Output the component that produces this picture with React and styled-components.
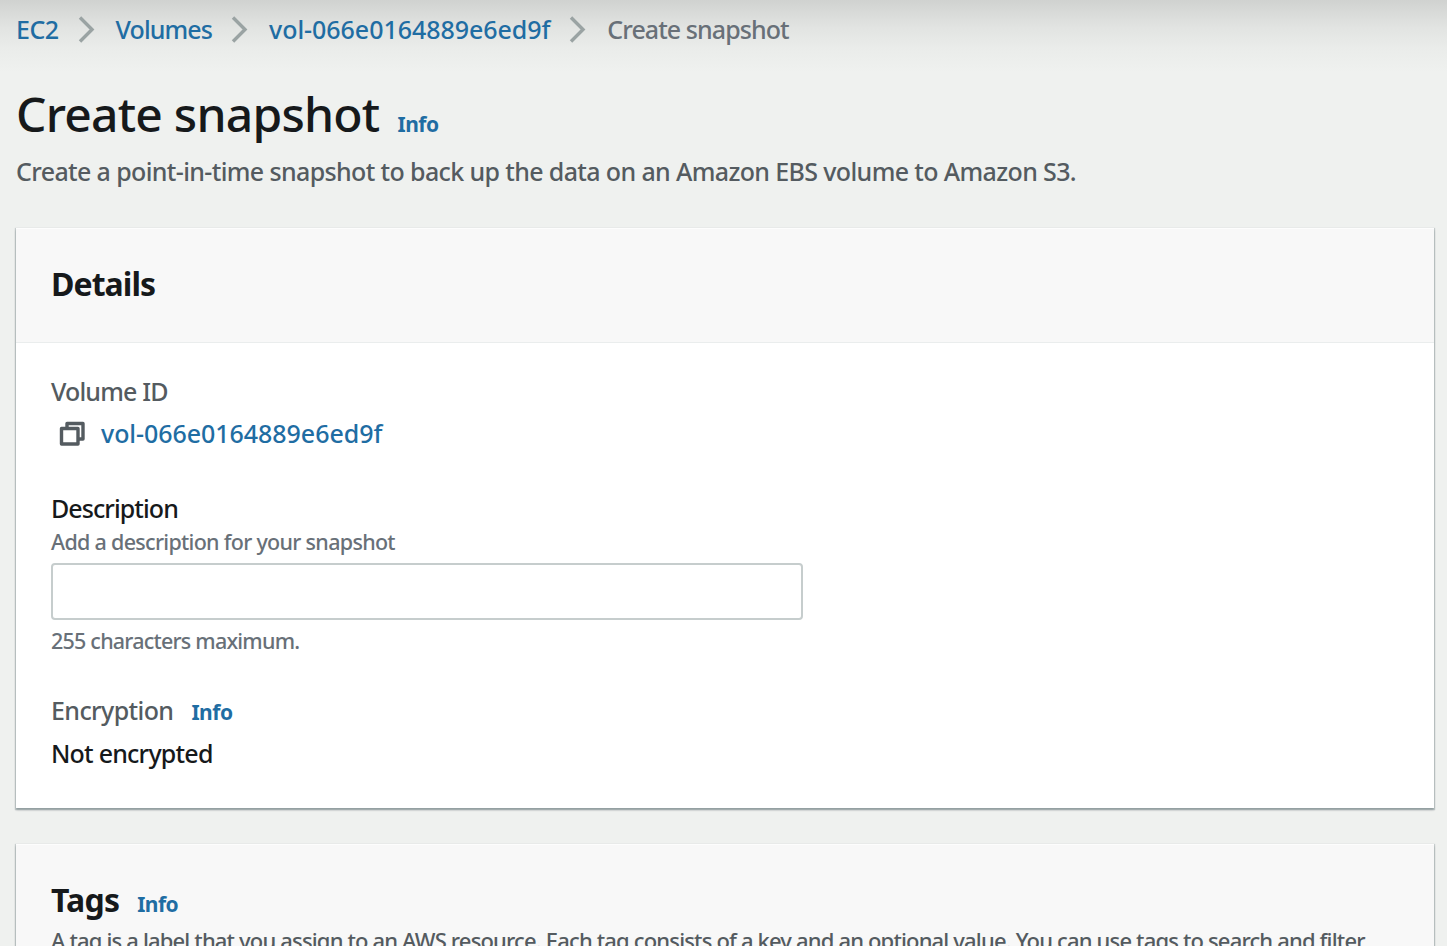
import React from "react";
import styled, { createGlobalStyle } from "styled-components";

const GlobalStyle = createGlobalStyle`
  * { box-sizing: border-box; }
  body {
    margin: 0;
    background: #eff1ef;
    overflow: hidden;
    font-family: "Noto Sans", "Open Sans", sans-serif;
    color: #16191b;
  }
`;

const Page = styled.main`
  height: 946px;
  overflow: hidden;
  padding: 11px 13px 0 16px;
  background: linear-gradient(#d0d2d0 0, #d8dad8 12px, #e2e4e2 28px, #eaecea 48px, #eff1ef 72px);
`;

const Breadcrumbs = styled.nav`
  display: flex;
  align-items: center;
  height: 36px;
`;

const Text = styled.span`
  font-size: ${(p) => p.$size || 25}px;
  font-weight: ${(p) => p.$weight || 500};
  line-height: ${(p) => p.$line || 36}px;
  letter-spacing: ${(p) => p.$track || 0}px;
  color: ${(p) => p.$color || "#545b60"};
  white-space: nowrap;
`;

const Link = styled(Text).attrs({ as: "a" })`
  color: #1f6da3;
`;

const InfoLink = styled(Link)`
  margin-left: 18px;
  font-size: 21px;
  font-weight: 700;
  letter-spacing: -0.5px;
`;

const Chevron = styled.svg`
  width: 18px;
  height: 28px;
  margin: 0 20px 0 19px;
  flex: none;
`;

const TitleRow = styled.header`
  display: flex;
  align-items: baseline;
  height: 60px;
  margin-top: 37px;
`;

const Title = styled(Text).attrs({ as: "h1" })`
  margin: 0;
`;

const Subtitle = styled(Text)`
  margin: 9px 0 39px;
`;

const Card = styled.section`
  height: ${(p) => p.$height}px;
  margin-bottom: 36px;
  background: #fff;
  box-shadow: 0 1px 1px 1px rgba(0, 28, 36, 0.16), 0 2px 2px rgba(0, 28, 36, 0.28);
`;

const CardHeader = styled.div`
  height: ${(p) => p.$height}px;
  padding: 35px 35px 0;
  background: #f8f8f8;
  border-top: 1px solid #fdfdfd;
  border-bottom: 1px solid #eaeded;
`;

const Row = styled.div`
  display: flex;
  align-items: ${(p) => p.$align || "baseline"};
`;

const CardBody = styled.div`
  padding: 30px 35px 0;
`;

const Field = styled.div`
  display: flex;
  flex-direction: column;
  gap: ${(p) => p.$gap}px;
  margin-bottom: ${(p) => p.$after || 0}px;
`;

const Input = styled.input`
  width: 752px;
  height: 57px;
  margin: 6px 0;
  border: 2px solid #c6cdcd;
  border-radius: 4px;
  background: #fff;
`;

const CopyIcon = styled.svg`
  width: 28px;
  height: 28px;
  margin: 0 15px 0 7px;
`;

function Separator() {
  return (
    <Chevron viewBox="0 0 18 28" fill="none" stroke="#9aa3a3" strokeWidth="3.4">
      <path d="M2 2.500 14 14.500 2 26.500" />
    </Chevron>
  );
}

export default function App() {
  return (
    <>
      <GlobalStyle />
      <Page>
        <Breadcrumbs>
          <Link $track={-0.5}>EC2</Link>
          <Separator />
          <Link $track={-0.9}>Volumes</Link>
          <Separator />
          <Link $track={-0.05}>vol-066e0164889e6ed9f</Link>
          <Separator />
          <Text $color="#687078" $track={-0.93}>Create snapshot</Text>
        </Breadcrumbs>
        <TitleRow>
          <Title $size={48} $line={60} $color="#16191b" $track={-0.77}>Create snapshot</Title>
          <InfoLink>Info</InfoLink>
        </TitleRow>
        <Subtitle as="p" $track={-0.63}>
          Create a point-in-time snapshot to back up the data on an Amazon EBS volume to Amazon S3.
        </Subtitle>

        <Card $height={580}>
          <CardHeader $height={115}>
            <Text $size={32} $line={40} $weight={700} $color="#16191b" $track={-0.95}>Details</Text>
          </CardHeader>
          <CardBody>
            <Field $gap={6} $after={39}>
              <Text $track={-0.85}>Volume ID</Text>
              <Row $align="center">
                <CopyIcon viewBox="0 0 28 28" fill="none" stroke="#545b60" strokeWidth="3.4" strokeLinejoin="round">
                  <path d="M3.500 9.500h16.500v15.500h-16.500z" />
                  <path d="M9 9.500V4.500h16v15.500H20" />
                </CopyIcon>
                <Link $track={-0.05}>vol-066e0164889e6ed9f</Link>
              </Row>
            </Field>
            <Field $gap={0} $after={36}>
              <Text $color="#16191b" $track={-0.93}>Description</Text>
              <Text $size={21.5} $line={31} $color="#687078" $track={-0.7}>Add a description for your snapshot</Text>
              <Input aria-label="Description" />
              <Text $size={21.5} $line={30} $color="#687078" $track={-0.78}>255 characters maximum.</Text>
            </Field>
            <Field $gap={5}>
              <Row>
                <Text $track={-0.6}>Encryption</Text>
                <InfoLink>Info</InfoLink>
              </Row>
              <Text $color="#16191b" $track={-0.78}>Not encrypted</Text>
            </Field>
          </CardBody>
        </Card>

        <Card $height={220}>
          <CardHeader $height={180}>
            <Row>
              <Text $size={32} $line={40} $weight={700} $color="#16191b" $track={-0.8}>Tags</Text>
              <InfoLink>Info</InfoLink>
            </Row>
            <Text $size={22} $track={-0.84}>
              A tag is a label that you assign to an AWS resource. Each tag consists of a key and an optional value. You can use tags to search and filter
            </Text>
          </CardHeader>
        </Card>
      </Page>
    </>
  );
}
